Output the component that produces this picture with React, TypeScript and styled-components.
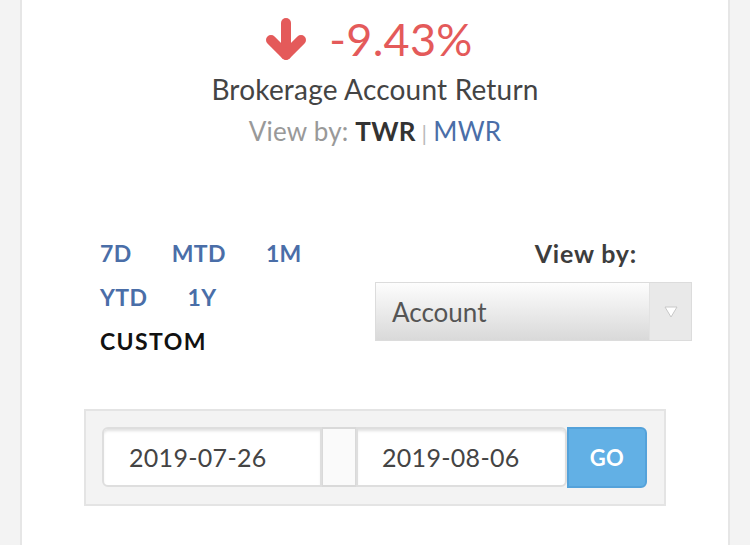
import * as React from 'react';
import styled, { createGlobalStyle } from 'styled-components';

const GlobalStyle = createGlobalStyle`
  html, body {
    margin: 0;
    padding: 0;
    background: #f3f3f3;
    font-family: 'Lato', 'Liberation Sans', sans-serif;
    overflow: hidden;
  }
`;

const Page = styled.div`
  display: flex;
  min-height: 545px;
`;

const Panel = styled.main`
  margin-left: 20px;
  width: 706px;
  min-height: 545px;
  background: #fff;
  border-left: 2px solid #e6e6e6;
  border-right: 2px solid #e6e6e6;
  box-sizing: content-box;
`;

const Summary = styled.section`
  display: flex;
  flex-direction: column;
  align-items: center;
  padding-top: 13px;
`;

const ReturnRow = styled.div`
  display: flex;
  align-items: center;
  gap: 21px;
  height: 52px;
  margin-right: 13px;
`;

const ReturnValue = styled.span`
  color: #e45a5a;
  font-size: 45px;
  line-height: 52px;
  letter-spacing: 0.3px;
`;

const ReturnLabel = styled.div`
  margin-top: 2px;
  color: #444;
  font-size: 28px;
  line-height: 44px;
  letter-spacing: 0.2px;
`;

const MethodRow = styled.div`
  color: #999;
  font-size: 26px;
  line-height: 40px;
  letter-spacing: 0.2px;
`;

const Method = styled.span<{ active?: boolean }>`
  color: ${(p) => (p.active ? '#333' : '#4a6ea8')};
  font-weight: ${(p) => (p.active ? 700 : 400)};
`;

const Divider = styled.span`
  color: #bbb;
  margin: 0 6px;
  font-size: 22px;
`;

const Controls = styled.section`
  display: flex;
  justify-content: space-between;
  margin-top: 78px;
  padding: 0 36px 0 78px;
`;

const Periods = styled.div`
  display: flex;
  flex-wrap: wrap;
  column-gap: 40px;
  width: 240px;
  align-content: flex-start;
`;

const Period = styled.a<{ active?: boolean }>`
  color: ${(p) => (p.active ? '#111' : '#4a6ea8')};
  font-size: 23px;
  font-weight: 700;
  line-height: 44px;
  letter-spacing: ${(p) => (p.active ? '1.4px' : '0.4px')};
  text-decoration: none;
  cursor: pointer;
`;

const ViewBy = styled.div`
  display: flex;
  flex-direction: column;
  width: 317px;
`;

const ViewByLabel = styled.div`
  color: #3d3d3d;
  font-size: 25px;
  font-weight: 700;
  line-height: 44px;
  text-align: right;
  padding-right: 55px;
  letter-spacing: 0.8px;
`;

const Select = styled.div`
  display: flex;
  height: 59px;
  margin-top: 7px;
  border: 1px solid #dcdcdc;
  box-sizing: border-box;
`;

const SelectValue = styled.div`
  flex: 1;
  display: flex;
  align-items: center;
  padding-left: 16px;
  color: #555;
  font-size: 26px;
  background: linear-gradient(#fdfdfd, #d9d9d9);
`;

const SelectArrow = styled.div`
  width: 41px;
  display: flex;
  align-items: center;
  justify-content: center;
  background: #e9e9e9;
  border-left: 1px solid #e2e2e2;
`;

const DateBox = styled.div`
  display: flex;
  margin: 46px 0 0 62px;
  width: 582px;
  padding: 16px;
  background: #f3f3f3;
  border: 2px solid #e4e4e4;
  box-sizing: border-box;
`;

const DateInput = styled.div<{ width: number; first?: boolean }>`
  width: ${(p) => p.width}px;
  height: 60px;
  display: flex;
  align-items: center;
  padding-left: ${(p) => (p.first ? 25 : 24)}px;
  box-sizing: border-box;
  background: #fff;
  border: 2px solid #dedede;
  border-radius: ${(p) => (p.first ? '6px 0 0 6px' : '0 6px 6px 0')};
  box-shadow: inset 0 3px 3px -1px rgba(0, 0, 0, 0.12);
  color: #444;
  font-size: 25px;
  letter-spacing: 0.3px;
`;

const DateGap = styled.div`
  width: 34px;
  height: 60px;
  box-sizing: border-box;
  background: #fafafa;
  border: 2px solid #d9d9d9;
  border-left-width: 1px;
  border-right-width: 1px;
`;

const GoButton = styled.button`
  width: 80px;
  height: 61px;
  margin: 0;
  padding: 0;
  background: #62b0e5;
  border: 2px solid #54a2da;
  border-radius: 0 6px 6px 0;
  color: #fff;
  font-family: inherit;
  font-size: 22px;
  font-weight: 700;
  letter-spacing: 0.5px;
  cursor: pointer;
`;

const DownArrow = () => (
  <svg width="44" height="44" viewBox="0 0 44 44">
    <g stroke="#e45a5a" strokeWidth="10" strokeLinecap="round" strokeLinejoin="round" fill="none">
      <path d="M22 6 V38" />
      <path d="M7 23 L22 38 L37 23" />
    </g>
  </svg>
);

const Caret = () => (
  <svg width="14" height="12" viewBox="0 0 14 12">
    <path d="M1 1 H13 L7 11 Z" fill="#fff" stroke="#c8c8c8" strokeWidth="1" />
  </svg>
);

const periods = ['7D', 'MTD', '1M', 'YTD', '1Y'];

export default function App() {
  return (
    <>
      <GlobalStyle />
      <Page>
        <Panel>
          <Summary>
            <ReturnRow>
              <DownArrow />
              <ReturnValue>-9.43%</ReturnValue>
            </ReturnRow>
            <ReturnLabel>Brokerage Account Return</ReturnLabel>
            <MethodRow>
              View by: <Method active>TWR</Method>
              <Divider>|</Divider>
              <Method>MWR</Method>
            </MethodRow>
          </Summary>
          <Controls>
            <Periods>
              {periods.map((p) => (
                <Period key={p}>{p}</Period>
              ))}
              <Period active>CUSTOM</Period>
            </Periods>
            <ViewBy>
              <ViewByLabel>View by:</ViewByLabel>
              <Select>
                <SelectValue>Account</SelectValue>
                <SelectArrow>
                  <Caret />
                </SelectArrow>
              </Select>
            </ViewBy>
          </Controls>
          <DateBox>
            <DateInput width={220} first>
              2019-07-26
            </DateInput>
            <DateGap />
            <DateInput width={211}>2019-08-06</DateInput>
            <GoButton>GO</GoButton>
          </DateBox>
        </Panel>
      </Page>
    </>
  );
}
